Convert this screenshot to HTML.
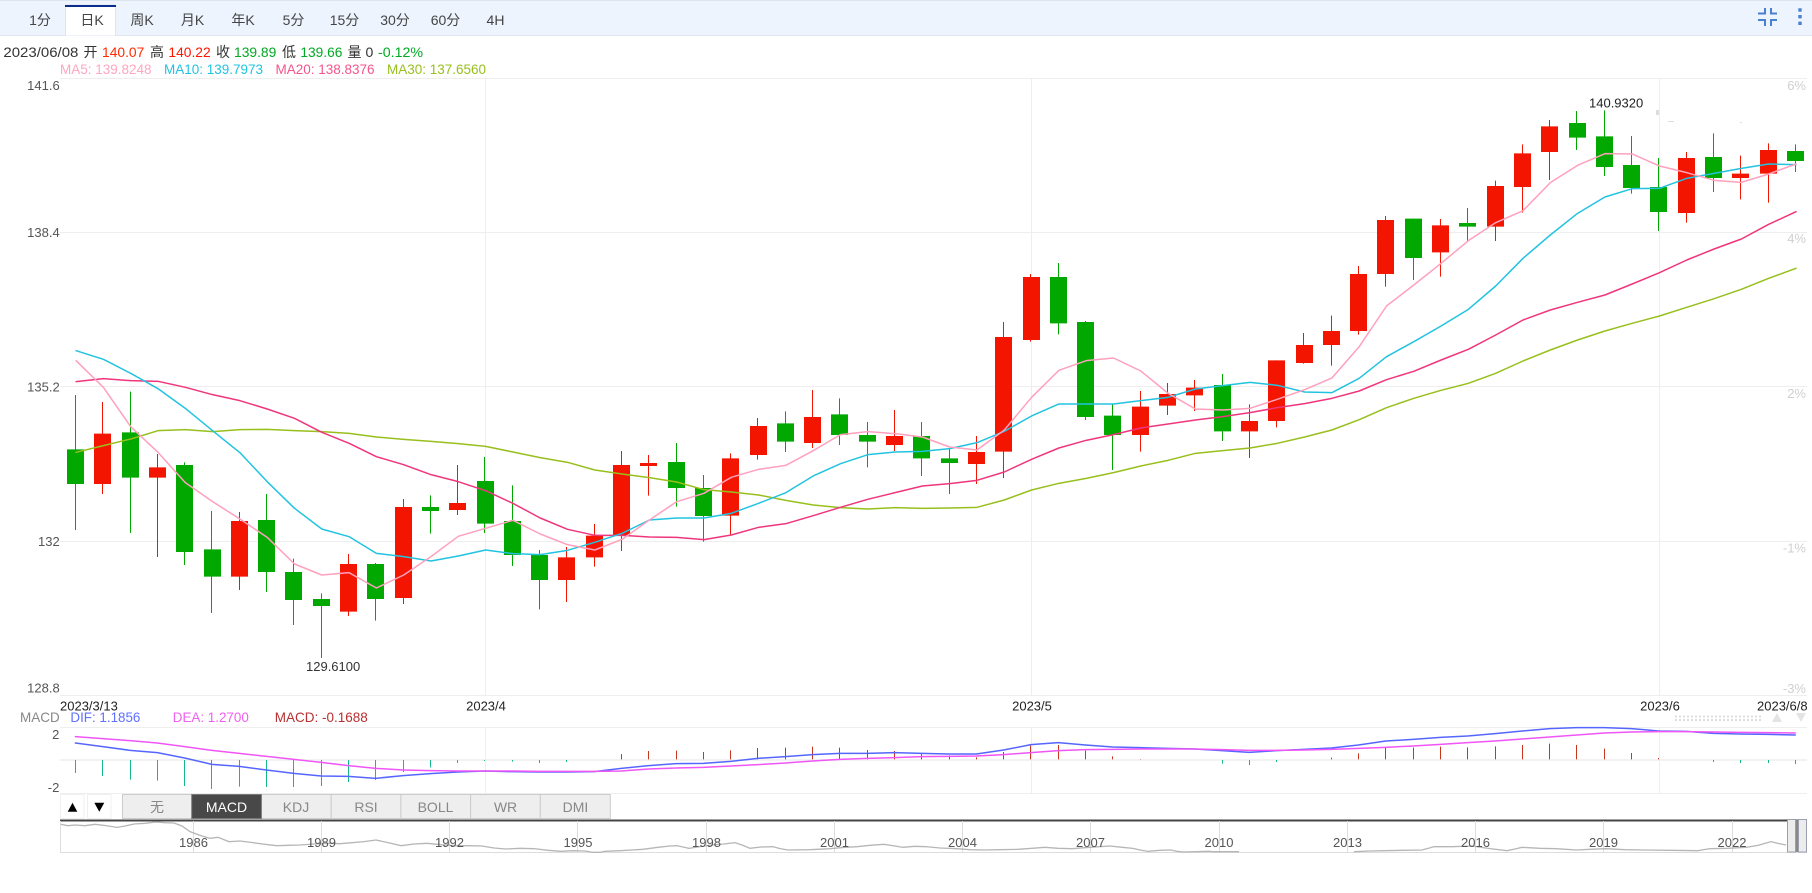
<!DOCTYPE html>
<html lang="zh">
<head>
<meta charset="utf-8">
<title>K线图</title>
<style>
html,body{margin:0;padding:0;background:#fff;width:1812px;height:893px;overflow:hidden}
svg{display:block;font-family:"Liberation Sans","Noto Sans CJK SC",sans-serif}
.n{vector-effect:non-scaling-stroke;fill:none}
.l{stroke-linejoin:round;stroke-linecap:round}
</style>
</head>
<body>
<svg width="1812" height="893" viewBox="0 0 1812 893" xmlns="http://www.w3.org/2000/svg">
<rect width="1812" height="893" fill="#fff"/>

<!-- toolbar -->
<rect x="0" y="0" width="1812" height="36" fill="#edf4fe"/>
<rect x="0" y="0" width="1812" height="1" fill="#dde5f3"/>
<rect x="0" y="35" width="1812" height="1" fill="#dde5f0"/>
<rect x="65.5" y="5" width="50" height="31" fill="#fff" stroke="#dde5f0" stroke-width="1"/>
<rect x="65" y="36" width="51" height="1" fill="#fff"/>
<rect x="65" y="5" width="51" height="2" fill="#0a2d8c"/>
<g font-size="14" fill="#444" text-anchor="middle">
<text x="40" y="25">1分</text>
<text x="92" y="25">日K</text>
<text x="142" y="25">周K</text>
<text x="192.5" y="25">月K</text>
<text x="243" y="25">年K</text>
<text x="293.5" y="25">5分</text>
<text x="344.5" y="25">15分</text>
<text x="395" y="25">30分</text>
<text x="445.5" y="25">60分</text>
<text x="495.5" y="25">4H</text>
</g>
<g fill="none" stroke="#4a80d0" stroke-width="2">
<path d="M1758 13.5H1765V8"/><path d="M1777 13.5H1771V8"/><path d="M1758 20H1765V26"/><path d="M1777 20H1771V26"/>
</g>
<g fill="#4a80d0"><rect x="1798.3" y="8.3" width="3.4" height="3.4"/><rect x="1798.3" y="15" width="3.4" height="3.4"/><rect x="1798.3" y="21.6" width="3.4" height="3.4"/></g>

<!-- info line -->
<g font-size="14" fill="#333">
<text x="3.4" y="57" textLength="75" lengthAdjust="spacingAndGlyphs">2023/06/08</text>
<text x="83.5" y="57">开</text>
<text x="102" y="57" fill="#ff2a00" textLength="42.3" lengthAdjust="spacingAndGlyphs">140.07</text>
<text x="150" y="57">高</text>
<text x="168.4" y="57" fill="#ff1500" textLength="42.3" lengthAdjust="spacingAndGlyphs">140.22</text>
<text x="216" y="57">收</text>
<text x="234" y="57" fill="#00aa22" textLength="42.3" lengthAdjust="spacingAndGlyphs">139.89</text>
<text x="282" y="57">低</text>
<text x="300.4" y="57" fill="#00aa22" textLength="42" lengthAdjust="spacingAndGlyphs">139.66</text>
<text x="347.5" y="57">量</text>
<text x="365.5" y="57">0</text>
<text x="378" y="57" fill="#00aa22" textLength="45" lengthAdjust="spacingAndGlyphs">-0.12%</text>
</g>
<g font-size="14">
<text x="60" y="74" fill="#ffa6c1" textLength="91.5" lengthAdjust="spacingAndGlyphs">MA5: 139.8248</text>
<text x="164" y="74" fill="#22c3e0" textLength="99" lengthAdjust="spacingAndGlyphs">MA10: 139.7973</text>
<text x="275.5" y="74" fill="#f5558c" textLength="99" lengthAdjust="spacingAndGlyphs">MA20: 138.8376</text>
<text x="387" y="74" fill="#98bf1c" textLength="99" lengthAdjust="spacingAndGlyphs">MA30: 137.6560</text>
</g>

<!-- main grid -->
<g fill="#eeeeee">
<rect x="60" y="78" width="1747" height="1"/>
<rect x="60" y="232" width="1747" height="1"/>
<rect x="60" y="386" width="1747" height="1"/>
<rect x="60" y="541" width="1747" height="1"/>
<rect x="60" y="695" width="1747" height="1"/>
<rect x="485" y="78" width="1" height="617"/>
<rect x="1031" y="78" width="1" height="617"/>
<rect x="1659" y="78" width="1" height="617"/>
</g>
<g font-size="13" fill="#555" text-anchor="end">
<text x="59.7" y="90">141.6</text>
<text x="59.7" y="237">138.4</text>
<text x="59.7" y="391.5">135.2</text>
<text x="59.7" y="546">132</text>
<text x="59.7" y="692.5">128.8</text>
</g>
<g font-size="13" fill="#cfcfcf" text-anchor="end">
<text x="1806" y="90">6%</text>
<text x="1806" y="243">4%</text>
<text x="1806" y="398">2%</text>
<text x="1806" y="552.5">-1%</text>
<text x="1806" y="693">-3%</text>
</g>
<g fill="#dddddd">
<rect x="1656" y="110" width="3" height="5"/>
<rect x="1668" y="121" width="6" height="1"/>
<rect x="1740" y="122" width="2" height="1"/>
</g>

<!-- candles lower group -->
<g transform="translate(0 300) scale(1 .33333)">
<path class="n" stroke="#f41500" stroke-width="1" d="M102.5 306V582M157.5 462V771M239.5 636V870M348.5 762V948M403.5 597V912M457.5 495V645M566.5 741V906M594.5 672V800M621.5 453V753M648.5 465V587M730.5 460V704M757.5 354V479M812.5 270V444M894.5 330V453M976.5 408V552M1003.5 66V534M1030.5 -78V125M1140.5 273V455M1167.5 249V345M1194.5 240V333M1249.5 313V474M1276.5 181V382M1303.5 99V191M1331.5 47V197M1358.5 -102V104"/>
<path class="n" stroke="#00a800" stroke-width="1" d="M75.5 285V690M130.5 275V699M184.5 487V795M211.5 633V939M266.5 582V876M293.5 776V975M321.5 880V1074M375.5 789V962M430.5 586V701M484.5 471V699M512.5 556V798M539.5 750V928M676.5 429V620M703.5 525V725M785.5 334V456M839.5 295V435M867.5 366V502M921.5 366V528M949.5 447V582M1058.5 -111V103M1085.5 63V360M1112.5 310V510M1222.5 222V423"/>
<path fill="#f41500" d="M94 401h17V552h-17zM149 502h17V533h-17zM231 663h17V830h-17zM340 792h17V935h-17zM395 621h17V894h-17zM449 609h17V630h-17zM558 772h17V840h-17zM586 707h17V772h-17zM613 495h17V706h-17zM640 489h17V498h-17zM722 475h17V647h-17zM750 378h17V465h-17zM804 351h17V429h-17zM886 408h17V435h-17zM968 456h17V492h-17zM995 111h17V455h-17zM1023 -69h17V120h-17zM1132 320h17V405h-17zM1159 282h17V317h-17zM1186 263h17V286h-17zM1241 363h17V394h-17zM1268 181h17V363h-17zM1296 135h17V189h-17zM1323 93h17V135h-17zM1350 -78h17V93h-17z"/>
<path fill="#00a800" d="M67 448h17V552h-17zM122 397h17V533h-17zM176 495h17V756h-17zM204 748h17V830h-17zM258 660h17V816h-17zM285 816h17V900h-17zM313 897h17V918h-17zM367 792h17V897h-17zM422 621h17V633h-17zM477 543h17V671h-17zM504 663h17V765h-17zM531 765h17V840h-17zM668 486h17V564h-17zM695 564h17V648h-17zM777 370h17V425h-17zM831 343h17V405h-17zM859 405h17V425h-17zM913 408h17V475h-17zM941 475h17V489h-17zM1050 -69h17V70h-17zM1077 66h17V351h-17zM1104 347h17V405h-17zM1214 255h17V394h-17z"/>
</g>
<!-- candles upper group -->
<g transform="scale(1 .33333)">
<path class="n" stroke="#f41500" stroke-width="1" d="M1385.5 648V860M1440.5 657V830M1495.5 542V723M1522.5 433V638M1549.5 360V540M1686.5 456V668M1740.5 467V598M1768.5 430V608"/>
<path class="n" stroke="#00a800" stroke-width="1" d="M1413.5 656V840M1467.5 624V722M1576.5 333V450M1604.5 331V528M1631.5 408V581M1658.5 474V693M1713.5 400V576M1795.5 433V516"/>
<path fill="#f41500" d="M1377 660h17V822h-17zM1432 676h17V757h-17zM1487 558h17V680h-17zM1514 460h17V561h-17zM1541 379h17V456h-17zM1678 474h17V639h-17zM1732 521h17V534h-17zM1760 450h17V521h-17z"/>
<path fill="#00a800" d="M1405 656h17V774h-17zM1459 669h17V680h-17zM1569 369h17V413h-17zM1596 409h17V501h-17zM1623 495h17V564h-17zM1650 561h17V636h-17zM1705 471h17V534h-17zM1787 453h17V483h-17z"/>
</g>

<!-- MA lines -->
<g transform="translate(.7 0) scale(1 .33333)">
<polyline class="n l" stroke="#98bf1c" stroke-width="1.5" points="75.4,1357 102.7,1337 130,1317 157.3,1292 184.6,1289 211.9,1295 239.2,1289 266.5,1288 293.8,1292 321.1,1295 348.4,1300 375.7,1311 403,1318 430.3,1324 457.6,1331 484.9,1339 512.2,1356 539.5,1373 566.8,1387 594.1,1410 621.4,1422 648.7,1433 676,1446 703.3,1469 730.6,1476 757.9,1485 785.2,1501 812.5,1515 839.8,1523 867.1,1527 894.4,1523 921.7,1525 949,1524 976.3,1522 1003.6,1500 1030.9,1470 1058.2,1450 1085.5,1435 1112.8,1418 1140.1,1398 1167.4,1381 1194.7,1360 1222,1352 1249.3,1344 1276.6,1330 1303.9,1311 1331.2,1290 1358.5,1259 1385.8,1223 1413.1,1195 1440.4,1171 1467.7,1150 1495,1120 1522.3,1083 1549.6,1050 1576.9,1020 1604.2,993 1631.5,970 1658.8,948 1686.1,922 1713.4,896 1740.7,868 1768,835 1795.3,805"/>
<polyline class="n l" stroke="#f0357c" stroke-width="1.5" points="75.4,1145 102.7,1136 130,1142 157.3,1144 184.6,1162 211.9,1184 239.2,1202 266.5,1227 293.8,1255 321.1,1297 348.4,1330 375.7,1370 403,1394 430.3,1424 457.6,1445 484.9,1472 512.2,1510 539.5,1554 566.8,1588 594.1,1606 621.4,1606 648.7,1611 676,1612 703.3,1619 730.6,1605 757.9,1582 785.2,1571 812.5,1547 839.8,1522 867.1,1498 894.4,1478 921.7,1458 949,1451 976.3,1441 1003.6,1416 1030.9,1378 1058.2,1344 1085.5,1321 1112.8,1304 1140.1,1284 1167.4,1272 1194.7,1260 1222,1250 1249.3,1238 1276.6,1223 1303.9,1211 1331.2,1195 1358.5,1173 1385.8,1139 1413.1,1114 1440.4,1080 1467.7,1048 1495,1005 1522.3,960 1549.6,930 1576.9,907 1604.2,885 1631.5,852 1658.8,818 1686.1,780 1713.4,747 1740.7,717 1768,673 1795.3,635"/>
<polyline class="n l" stroke="#22c3e0" stroke-width="1.5" points="75.4,1052 102.7,1078 130,1120 157.3,1166 184.6,1225 211.9,1292 239.2,1358 266.5,1445 293.8,1525 321.1,1587 348.4,1610 375.7,1660 403,1670 430.3,1683 457.6,1668 484.9,1650 512.2,1661 539.5,1664 566.8,1651 594.1,1627 621.4,1600 648.7,1560 676,1554 703.3,1554 730.6,1540 757.9,1510 785.2,1478 812.5,1428 839.8,1391 867.1,1364 894.4,1356 921.7,1354 949,1346 976.3,1328 1003.6,1294 1030.9,1248 1058.2,1212 1085.5,1212 1112.8,1212 1140.1,1202 1167.4,1192 1194.7,1167 1222,1157 1249.3,1147 1276.6,1156 1303.9,1176 1331.2,1178 1358.5,1135 1385.8,1070 1413.1,1025 1440.4,978 1467.7,928 1495,858 1522.3,775 1549.6,705 1576.9,640 1604.2,591 1631.5,566 1658.8,565 1686.1,535 1713.4,520 1740.7,505 1768,492 1795.3,494"/>
<polyline class="n l" stroke="#ffa0bd" stroke-width="1.5" points="75.4,1082 102.7,1162 130,1280 157.3,1357 184.6,1448 211.9,1505 239.2,1557 266.5,1612 293.8,1692 321.1,1725 348.4,1718 375.7,1764 403,1725 430.3,1670 457.6,1609 484.9,1585 512.2,1561 539.5,1602 566.8,1634 594.1,1650 621.4,1618 648.7,1560 676,1505 703.3,1480 730.6,1432 757.9,1408 785.2,1396 812.5,1352 839.8,1304 867.1,1295 894.4,1301 921.7,1311 949,1341 976.3,1350 1003.6,1290 1030.9,1192 1058.2,1111 1085.5,1082 1112.8,1074 1140.1,1113 1167.4,1180 1194.7,1227 1222,1230 1249.3,1225 1276.6,1198 1303.9,1169 1331.2,1134 1358.5,1040 1385.8,918 1413.1,855 1440.4,790 1467.7,722 1495,668 1522.3,632 1549.6,548 1576.9,496 1604.2,461 1631.5,462 1658.8,498 1686.1,518 1713.4,541 1740.7,547 1768,522 1795.3,492"/>
</g>

<text x="1589" y="107.5" font-size="13" fill="#222">140.9320</text>
<text x="306" y="671" font-size="13" fill="#333">129.6100</text>

<!-- date labels -->
<g font-size="13" fill="#222">
<text x="60" y="710.5">2023/3/13</text>
<text x="486" y="710.5" text-anchor="middle">2023/4</text>
<text x="1032" y="710.5" text-anchor="middle">2023/5</text>
<text x="1660" y="710.5" text-anchor="middle">2023/6</text>
<text x="1757" y="710.5">2023/6/8</text>
</g>

<!-- macd legend -->
<g font-size="14">
<text x="20" y="722" fill="#888" textLength="39.7" lengthAdjust="spacingAndGlyphs">MACD</text>
<text x="70.4" y="722" fill="#6070ff" textLength="70" lengthAdjust="spacingAndGlyphs">DIF: 1.1856</text>
<text x="172.8" y="722" fill="#f060f0" textLength="76" lengthAdjust="spacingAndGlyphs">DEA: 1.2700</text>
<text x="274.8" y="722" fill="#b83030" textLength="93" lengthAdjust="spacingAndGlyphs">MACD: -0.1688</text>
</g>
<g fill="none" stroke="#dddddd" stroke-width="2" stroke-dasharray="2 2">
<path d="M1675 716.5H1762"/><path d="M1675 720H1762"/>
</g>
<polygon points="1772,722 1782,722 1777,713" fill="#e4e4e4"/>
<polygon points="1796,713 1806,713 1801,722" fill="#e4e4e4"/>

<!-- macd grid -->
<g fill="#eeeeee">
<rect x="60" y="727" width="1747" height="1"/>
<rect x="60" y="759" width="1747" height="2" fill="#f2f2f2"/>
<rect x="60" y="793" width="1747" height="1"/>
<rect x="485" y="727" width="1" height="66"/>
<rect x="1031" y="727" width="1" height="66"/>
<rect x="1659" y="727" width="1" height="66"/>
</g>
<g font-size="13" fill="#555" text-anchor="end">
<text x="59.3" y="739">2</text>
<text x="59.3" y="792">-2</text>
</g>
<g transform="translate(0 690) scale(1 .33333)">
<path class="n" stroke="#12b98a" stroke-width="1" d="M75.5 210V249M102.5 210V258M130.5 210V269M157.5 210V272M184.5 210V288M211.5 210V297M239.5 210V290M266.5 210V291M293.5 210V291M321.5 210V288M348.5 210V276M375.5 210V270M403.5 210V246M430.5 210V232M457.5 210V219M484.5 210V213M512.5 210V215M539.5 210V219M566.5 210V216M1222.5 210V221M1249.5 210V225M1276.5 210V216M1713.5 210V216M1740.5 210V219M1768.5 210V219M1795.5 210V222"/>
<path class="n" stroke="#c8351c" stroke-width="1" d="M621.5 192V208M648.5 183V208M676.5 182V208M703.5 186V208M730.5 181V208M757.5 174V208M785.5 173V208M812.5 170V208M839.5 173V208M867.5 180V208M894.5 183V208M921.5 190V208M949.5 196V208M976.5 202V208M1003.5 186V208M1030.5 167V208M1058.5 165V208M1085.5 182V208M1112.5 199V208M1140.5 207V208M1331.5 203V208M1358.5 190V208M1385.5 173V208M1413.5 173V208M1440.5 170V208M1467.5 172V208M1495.5 169V208M1522.5 165V208M1549.5 161V208M1576.5 165V208M1604.5 176V208M1631.5 189V208M1658.5 204V208"/>
<polyline class="n l" stroke="#5566ff" stroke-width="1.5" points="75.4,159 102.7,170 130,181 157.3,188 184.6,204 211.9,223 239.2,229 266.5,240 293.8,250 321.1,258 348.4,259 375.7,265 403,257 430.3,251 457.6,246 484.9,243 512.2,245 539.5,246 566.8,246 594.1,245 621.4,235 648.7,227 676,221 703.3,220 730.6,214 757.9,205 785.2,200 812.5,194 839.8,190 867.1,190 894.4,188 921.7,190 949,192 976.3,192 1003.6,180 1030.9,164 1058.2,158 1085.5,165 1112.8,171 1140.1,173 1167.4,175 1194.7,177 1222,182 1249.3,187 1276.6,182 1303.9,178 1331.2,174 1358.5,165 1385.8,153 1413.1,148 1440.4,142 1467.7,138 1495,131 1522.3,123 1549.6,116 1576.9,113 1604.2,113 1631.5,116 1658.8,123 1686.1,124 1713.4,130 1740.7,132 1768,133 1795.3,135"/>
<polyline class="n l" stroke="#f055f5" stroke-width="1.5" points="75.4,140 102.7,146 130,152 157.3,159 184.6,170 211.9,181 239.2,190 266.5,199 293.8,208 321.1,217 348.4,227 375.7,235 403,240 430.3,242 457.6,243 484.9,243 512.2,243 539.5,244 566.8,244 594.1,244 621.4,243 648.7,237 676,234 703.3,232 730.6,228 757.9,224 785.2,219 812.5,213 839.8,208 867.1,205 894.4,203 921.7,200 949,199 976.3,198 1003.6,194 1030.9,188 1058.2,182 1085.5,179 1112.8,178 1140.1,177 1167.4,177 1194.7,177 1222,179 1249.3,181 1276.6,181 1303.9,180 1331.2,178 1358.5,175 1385.8,172 1413.1,168 1440.4,163 1467.7,158 1495,153 1522.3,147 1549.6,141 1576.9,135 1604.2,129 1631.5,126 1658.8,125 1686.1,125 1713.4,126 1740.7,127 1768,128 1795.3,129"/>
</g>

<!-- indicator tabs -->
<rect x="60.5" y="794.5" width="23.5" height="24" fill="#fff" stroke="#f0f0f0"/>
<rect x="87.5" y="794.5" width="23.5" height="24" fill="#fff" stroke="#f0f0f0"/>
<polygon points="67.7,811.7 77.3,811.7 72.5,802.7" fill="#000"/>
<polygon points="94.3,802.7 104.3,802.7 99.3,811.7" fill="#000"/>
<g stroke="#cccccc" fill="#eeeeee">
<rect x="122.5" y="794.5" width="69.7" height="24"/>
<rect x="261.5" y="794.5" width="69.7" height="24"/>
<rect x="331.2" y="794.5" width="69.7" height="24"/>
<rect x="400.9" y="794.5" width="69.7" height="24"/>
<rect x="470.6" y="794.5" width="69.7" height="24"/>
<rect x="540.3" y="794.5" width="70" height="24"/>
</g>
<rect x="191.7" y="794.5" width="69.7" height="24" fill="#484848" stroke="#777"/>
<g font-size="14" fill="#888" text-anchor="middle">
<text x="157" y="812">无</text>
<text x="226.5" y="812" fill="#fff">MACD</text>
<text x="296" y="812">KDJ</text>
<text x="366" y="812">RSI</text>
<text x="435.5" y="812">BOLL</text>
<text x="505.5" y="812">WR</text>
<text x="575.5" y="812">DMI</text>
</g>

<!-- navigator -->
<rect x="60" y="819.5" width="1747" height="2" fill="#444"/>
<g fill="#dddddd">
<rect x="60" y="821" width="1" height="32"/>
<rect x="60" y="852" width="1747" height="1"/>
<rect x="193" y="821" width="1" height="31"/><rect x="321" y="821" width="1" height="31"/><rect x="449" y="821" width="1" height="31"/><rect x="577" y="821" width="1" height="31"/><rect x="706" y="821" width="1" height="31"/><rect x="834" y="821" width="1" height="31"/><rect x="962" y="821" width="1" height="31"/><rect x="1090" y="821" width="1" height="31"/><rect x="1219" y="821" width="1" height="31"/><rect x="1347" y="821" width="1" height="31"/><rect x="1475" y="821" width="1" height="31"/><rect x="1603" y="821" width="1" height="31"/><rect x="1732" y="821" width="1" height="31"/>
</g>
<g transform="translate(0 690) scale(1 .33333)">
<polyline class="n" stroke="#b6b6b6" stroke-width="1.3" points="61,403 68,407 75,405 85,407 95,403 106,407 117,412 125,408 134,402 145,400 156,396 165,398 174,399 182,408 190,425 200,436 210,445 218,442 229,455 240,453 253,458 265,463 277,467 288,466 300,465 314,462 328,460 340,461 352,458 364,455 376,450 388,458 401,467 414,462 427,460 441,464 455,467 468,467 482,468 494,474 506,477 520,475 534,476 548,481 561,484 573,482 585,483 593,487 600,487 605,484 620,482 643,478 658,472 670,468 677,467 689,475 700,470 712,465 724,462 735,458 742,465 750,475 761,471 773,470 780,476 788,480 810,479 830,476 845,472 857,470 870,466 884,463 895,468 903,472 915,469 926,470 940,474 957,476 970,479 984,480 1000,479 1018,478 1032,475 1045,472 1058,475 1072,476 1090,472 1110,468 1122,472 1133,475 1140,480 1148,484 1160,481 1171,480 1177,484 1183,486 1196,485 1209,484 1212,485 1239,485"/>
<polyline class="n" stroke="#b6b6b6" stroke-width="1.3" points="1354,485 1370,483 1384,482 1403,481 1422,480 1428,475 1434,470 1452,470 1472,468 1490,476 1507,482 1515,477 1522,472 1540,475 1556,476 1566,478 1576,480 1590,478 1606,476 1625,479 1644,480 1670,481 1698,482 1704,479 1710,476 1728,475 1746,472 1758,466 1771,455 1778,460 1786,465"/>
</g>
<g font-size="13" fill="#555" text-anchor="middle">
<text x="193.5" y="847">1986</text>
<text x="321.5" y="847">1989</text>
<text x="449.5" y="847">1992</text>
<text x="578" y="847">1995</text>
<text x="706.5" y="847">1998</text>
<text x="834.5" y="847">2001</text>
<text x="962.5" y="847">2004</text>
<text x="1090.5" y="847">2007</text>
<text x="1219" y="847">2010</text>
<text x="1347.5" y="847">2013</text>
<text x="1475.5" y="847">2016</text>
<text x="1603.5" y="847">2019</text>
<text x="1732" y="847">2022</text>
</g>
<rect x="1795" y="820" width="4" height="32" fill="#888"/>
<rect x="1787.5" y="819.5" width="8" height="32.5" fill="#ececec" stroke="#9aa0b0"/>
<rect x="1798.5" y="819.5" width="8" height="32.5" fill="#ececec" stroke="#9aa0b0"/>
</svg>
</body>
</html>
